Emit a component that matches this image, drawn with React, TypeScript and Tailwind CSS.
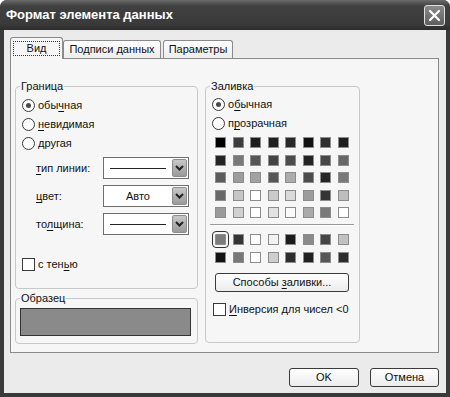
import React from "react";

const swatchRows: string[][] = [
  ["#000000", "#3c3c3c", "#1c1c1c", "#202020", "#282828", "#121212", "#2e2e2e", "#1e1e1e"],
  ["#242424", "#7a7a7a", "#565656", "#444444", "#4c4c4c", "#242424", "#474747", "#686868"],
  ["#5c5c5c", "#9c9c9c", "#a2a2a2", "#575757", "#acacac", "#4c4c4c", "#252525", "#7a7a7a"],
  ["#686868", "#c6c6c6", "#ffffff", "#cacaca", "#dadada", "#9c9c9c", "#353535", "#bdbdbd"],
  ["#9a9a9a", "#d0d0d0", "#ffffff", "#e2e2e2", "#fafafa", "#aaaaaa", "#7a7a7a", "#ffffff"],
];

const extraRows: string[][] = [
  ["#7c7c7c", "#353535", "#ffffff", "#f2f2f2", "#1c1c1c", "#8a8a8a", "#464646", "#c2c2c2"],
  ["#121212", "#787878", "#ffffff", "#cecece", "#2c2c2c", "#202020", "#575757", "#2c2c2c"],
];

function Radio({ checked }: { checked?: boolean }) {
  return (
    <span className="w-[13px] h-[13px] rounded-full border border-[#3a3a3a] bg-white flex items-center justify-center shrink-0">
      {checked && <span className="w-[5px] h-[5px] rounded-full bg-[#4a4a4a]" />}
    </span>
  );
}

function Checkbox() {
  return <span className="w-[13px] h-[13px] border border-[#3a3a3a] bg-white shrink-0" />;
}

// подчёркнутая буква (клавиша доступа)
function U({ children }: { children: React.ReactNode }) {
  return <span className="underline underline-offset-[2px]">{children}</span>;
}

function ComboArrow() {
  return (
    <span className="w-[15px] h-[18px] mr-px rounded-[2px] bg-[linear-gradient(#c8c8c8,#9a9a9a)] border border-[#8c8c8c] flex items-center justify-center">
      <svg width="9" height="6" viewBox="0 0 9 6">
        <path d="M1 1 L4.5 4.5 L8 1" fill="none" stroke="#222" strokeWidth="2" />
      </svg>
    </span>
  );
}

function Combo({ children }: { children: React.ReactNode }) {
  return (
    <div className="w-[86px] h-[22px] border border-[#6e6e6e] bg-white flex items-center">
      <div className="flex-1 flex items-center justify-center">{children}</div>
      <ComboArrow />
    </div>
  );
}

function LineSample() {
  return <span className="w-[56px] h-px bg-[#222]" />;
}

export default function App() {
  return (
    <div className="w-[450px] h-[397px] bg-[#3a3a3a] rounded-t-[7px] flex flex-col font-['Liberation_Sans',Arial,sans-serif] text-[11px] text-[#111] overflow-hidden">
      {/* заголовок */}
      <div className="h-[30px] shrink-0 flex items-center justify-between pl-[6px] pr-[5px] bg-[linear-gradient(#6a6a6a,#404040_20%,#3a3a3a_80%,#2c2c2c)]">
        <span className="text-white font-bold text-[13px]">Формат элемента данных</span>
        <span className="w-[21px] h-[21px] rounded-[3px] border border-[#e0e0e0] bg-[linear-gradient(#8a8a8a,#5e5e5e)] flex items-center justify-center">
          <svg width="13" height="13" viewBox="0 0 13 13">
            <path d="M2 2 L11 11 M11 2 L2 11" stroke="#fff" strokeWidth="2.2" strokeLinecap="round" />
          </svg>
        </span>
      </div>

      {/* тело окна */}
      <div className="flex-1 mx-[4px] mb-[4px] bg-[#ebebeb] flex flex-col pt-[7px] pl-[6px] pr-[7px]">
        {/* вкладки */}
        <div className="flex items-end h-[21px]">
          <div className="relative z-10 w-[53px] h-[22px] -mb-px border border-b-0 border-[#8a8a8a] rounded-t-[3px] bg-[#f6f6f6] flex items-start justify-center pt-[3px]">
            <span className="w-[47px] h-[15px] border border-dotted border-[#333] flex items-center justify-center">Вид</span>
          </div>
          <div className="w-[98px] h-[18px] border border-b-0 border-[#8a8a8a] rounded-t-[3px] bg-[linear-gradient(#ffffff,#ececec)] flex items-center justify-center whitespace-nowrap">
            Подписи данных
          </div>
          <div className="w-[70px] h-[18px] ml-[2px] border border-b-0 border-[#8a8a8a] rounded-t-[3px] bg-[linear-gradient(#ffffff,#ececec)] flex items-center justify-center">
            Параметры
          </div>
        </div>

        {/* панель */}
        <div className="w-[429px] h-[295px] border border-[#8a8a8a] bg-[#f6f6f6] flex pt-[20px] pl-[4px] gap-[7px]">
          {/* левая колонка */}
          <div className="flex flex-col">
            <fieldset className="w-[183px] h-[210px] border border-[#c8c8c8] rounded-[4px]">
              <legend className="ml-[4px] px-[1px] leading-[14px]">Граница</legend>
              <div className="flex flex-col pt-[3px] pl-[6px]">
                <div className="h-[19px] flex items-center gap-[3px]">
                  <Radio checked />
                  <span>
                    обы<U>ч</U>ная
                  </span>
                </div>
                <div className="h-[19px] flex items-center gap-[3px]">
                  <Radio />
                  <span>
                    <U>н</U>евидимая
                  </span>
                </div>
                <div className="h-[19px] flex items-center gap-[3px]">
                  <Radio />
                  <span>другая</span>
                </div>
              </div>
              <div className="flex flex-col gap-[6px] mt-[4px]">
                <div className="h-[22px] flex items-center">
                  <span className="w-[87px] pl-[20px]">
                    <U>т</U>ип линии:
                  </span>
                  <Combo>
                    <LineSample />
                  </Combo>
                </div>
                <div className="h-[22px] flex items-center">
                  <span className="w-[87px] pl-[20px]">
                    <U>ц</U>вет:
                  </span>
                  <Combo>
                    <span>Авто</span>
                  </Combo>
                </div>
                <div className="h-[22px] flex items-center">
                  <span className="w-[87px] pl-[20px]">
                    то<U>л</U>щина:
                  </span>
                  <Combo>
                    <LineSample />
                  </Combo>
                </div>
              </div>
              <div className="h-[13px] mt-[23px] pl-[6px] flex items-center gap-[3px]">
                <Checkbox />
                <span>
                  с тен<U>ь</U>ю
                </span>
              </div>
            </fieldset>

            <fieldset className="w-[183px] h-[53px] mt-[2px] border border-[#c8c8c8] rounded-[4px]">
              <legend className="ml-[4px] px-[1px] leading-[14px]">Образец</legend>
              <div className="pt-[3px] pl-[4px]">
                <div className="w-[171px] h-[28px] border border-[#333] bg-[#8a8a8a]" />
              </div>
            </fieldset>
          </div>

          {/* правая колонка */}
          <fieldset className="w-[155px] h-[264px] border border-[#c8c8c8] rounded-[4px]">
            <legend className="ml-[4px] px-[1px] leading-[14px]">Заливка</legend>
            <div className="flex flex-col pt-[2px] pl-[6px]">
              <div className="h-[19px] flex items-center gap-[3px]">
                <Radio checked />
                <span>
                  о<U>б</U>ычная
                </span>
              </div>
              <div className="h-[19px] flex items-center gap-[3px]">
                <Radio />
                <span>
                  п<U>р</U>озрачная
                </span>
              </div>
            </div>

            <div className="mt-[4px] pl-[9px] grid grid-cols-[repeat(8,11px)] gap-[6.5px]">
              {swatchRows.flat().map((c, i) => (
                <span key={i} className="w-[11px] h-[11px] border border-[#8c8c8c]" style={{ backgroundColor: c }} />
              ))}
            </div>

            <div className="ml-[4px] mt-[6px] w-[144px] h-[2px] border-t border-[#9a9a9a] border-b border-b-white" />

            <div className="mt-[8px] pl-[9px] grid grid-cols-[repeat(8,11px)] gap-[6.5px]">
              {extraRows.flat().map((c, i) => (
                <span
                  key={i}
                  className={
                    i === 0
                      ? "w-[11px] h-[11px] border border-[#8c8c8c] rounded-[1px] outline outline-1 outline-[#333] outline-offset-[2px]"
                      : "w-[11px] h-[11px] border border-[#8c8c8c]"
                  }
                  style={{ backgroundColor: c }}
                />
              ))}
            </div>

            <div className="ml-[9px] mt-[10px] w-[134px] h-[19px] rounded-[3px] border border-[#3a3a3a] bg-[linear-gradient(#ffffff,#ececec)] flex items-center justify-center">
              <span>
                Способы <U>з</U>аливки...
              </span>
            </div>

            <div className="h-[13px] mt-[11px] pl-[7px] flex items-center gap-[3px] whitespace-nowrap">
              <Checkbox />
              <span>
                <U>И</U>нверсия для чисел &lt;0
              </span>
            </div>
          </fieldset>
        </div>

        {/* кнопки */}
        <div className="mt-[15px] flex justify-end gap-[11px]">
          <div className="w-[70px] h-[19px] rounded-[3px] border border-[#3a3a3a] bg-[linear-gradient(#ffffff,#ececec)] flex items-center justify-center">
            OK
          </div>
          <div className="w-[69px] h-[19px] rounded-[3px] border border-[#3a3a3a] bg-[linear-gradient(#ffffff,#ececec)] flex items-center justify-center">
            Отмена
          </div>
        </div>
      </div>
    </div>
  );
}
